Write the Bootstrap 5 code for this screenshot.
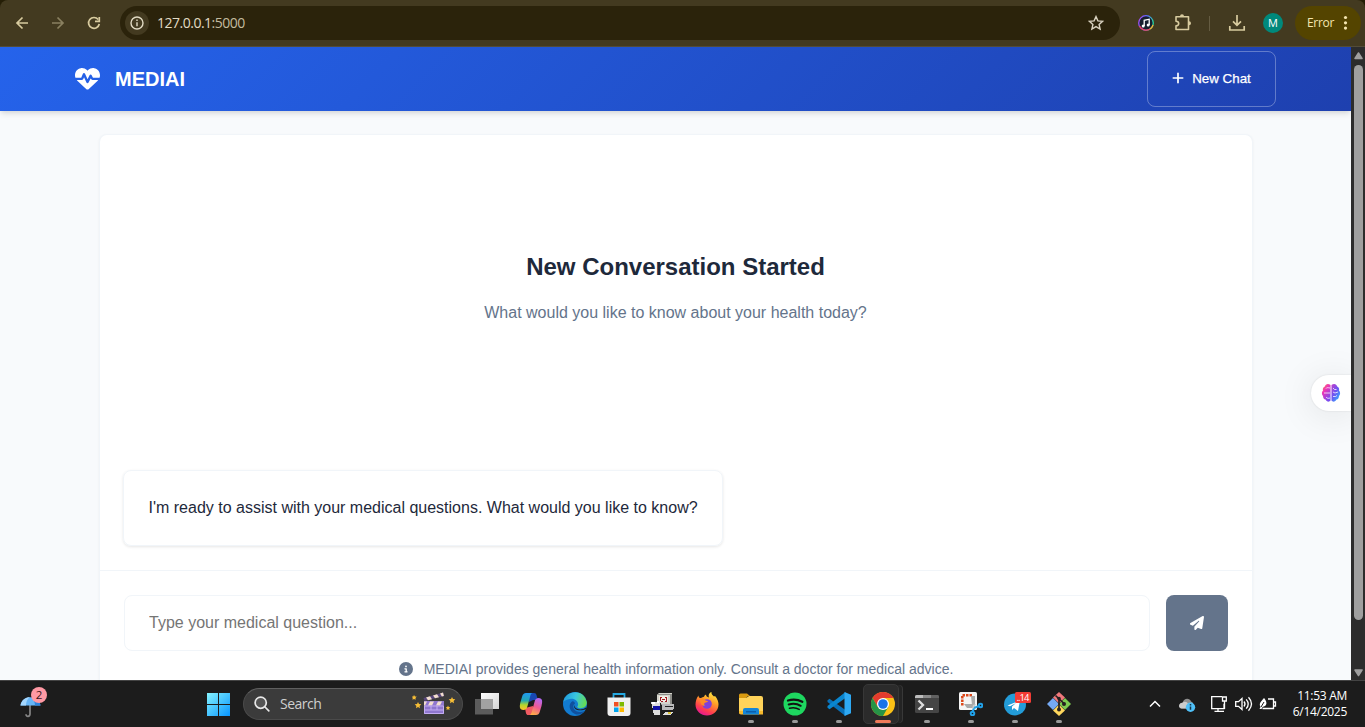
<!DOCTYPE html>
<html lang="en">
<head>
<meta charset="utf-8">
<meta name="viewport" content="width=device-width, initial-scale=1">
<title>MEDIAI</title>
<link rel="stylesheet" href="https://cdn.jsdelivr.net/npm/bootstrap@5.3.0/dist/css/bootstrap.min.css">
<style>
body{font-family:"Liberation Sans",Arial,sans-serif;color:#1e293b;background:#251e06}
svg{display:block;flex:none}
.ui-font{font-family:"Open Sans","Noto Sans",sans-serif}
.toolbar{height:47px;background:#433a20;border-bottom:1px solid #534c38;border-radius:8px 8px 0 0;color:#d8cb9f}
.omnibox{width:1000px;height:34px;margin-left:18px;background:#2b230b;padding:0 16px 0 5px}
.site-info{width:24px;height:24px;background:#433a20}
.address{font-size:14px;margin-left:8px;padding-bottom:2px;letter-spacing:-.5px;color:#e2dbc4}
.address .port{color:#c3bb9f}
.avatar{width:20px;height:20px;background:#00897b;color:#fff;font-size:11px;margin-left:17px}
.err{width:66px;height:34px;margin-left:12px;padding-left:12px;background:#544400;color:#f5e6b0;font-size:12px;letter-spacing:-.3px}
.divider{width:1px;height:15px;background:#655c42;margin:0 18px 0 17px}
.page-area{background:#f8fafc}
.app-nav{height:64px;background:linear-gradient(135deg,#2563eb,#1e40af);box-shadow:0 4px 6px -1px rgba(0,0,0,.1),0 2px 4px -1px rgba(0,0,0,.06);z-index:1}
.app-nav .inner{width:1201px}
.brand{font-size:20px;font-weight:700;gap:15px;color:#fff}
.brand svg{margin-bottom:1px}
.new-chat{width:129px;height:56px;border:1px solid rgba(255,255,255,.3);border-radius:8px;color:#fff;font-size:13.330px;gap:8px;font-weight:500;-webkit-text-stroke:.25px #fff}
.new-chat svg{margin-bottom:2px}
.chat-card{width:1154px;margin:23px 0 0 1px;background:#fff;border:1px solid #f1f5f9;border-bottom:0;border-radius:8px 8px 0 0;box-shadow:0 1px 3px rgba(0,0,0,.05)}
.messages{height:435px;padding:0 24px 24px 23px}
.welcome h2{font-size:24px;line-height:28px;font-weight:700;margin:118px 0 22px}
.welcome p{font-size:16px;line-height:20px;color:#64748b;margin:0}
.bot-message{width:600px;height:76px;border:1px solid #f1f5f9;border-radius:8px;padding:0 24px 1px 24.500px;box-shadow:0 1px 3px rgba(0,0,0,.1)}
.composer{border-top:1px solid #f1f5f9;padding:24px 24px 0}
.question{height:56px;border:1px solid #f1f5f9;border-radius:8px;padding:0 24px;color:#757575;font-size:16px}
.question::placeholder{color:#757575}
.question:focus{outline:0}
.send{width:62px;height:56px;background:#64748b;border-radius:8px;color:#fff}
.notice{font-size:14px;line-height:17px;color:#64748b;margin-top:10px;gap:11px}
.notice svg{margin-bottom:2px}
.scroll-track{width:14px;background:#2c2c2c;padding:5px 0 3px}
.scroll-thumb{width:9px;height:555px;background:#9f9f9f;border-radius:5px;margin-top:5px}
.brain-tab{right:0;top:328px;width:40px;height:36px;border-radius:18px 0 0 18px;background:#fff;padding-left:10px;box-shadow:0 4px 36px rgba(0,0,0,.1),0 0 2px rgba(0,0,0,.12)}
.taskbar{height:47px;background:#1c1c1c;border-top:1px solid #444;color:#fff}
.weather{width:196px;padding:0 0 2px 20px}
.task{width:44px;height:46px}
.task.running::after{content:"";position:absolute;bottom:4px;width:6px;height:3px;border-radius:2px;background:#999}
.task.current::before{content:"";position:absolute;inset:3px 6px 3px 2px;border:1px solid #373737;border-radius:5px;background:#2b2b2b;box-shadow:4px 0 0 -1px #242424,5px 0 0 -1px #383838}
.task.current::after{width:16px;background:#f07a5a}
.task svg{position:relative}
.search-pill{width:220px;height:32px;margin:0 2px 0 3px;background:#3b3b3b;border:1px solid #4a4a4a;border-top-color:#606060;color:#cfcfcf;font-size:14px;padding:0 6px 0 10px}
.search-pill .label{margin-left:10px;padding-bottom:2px;letter-spacing:-.5px}
.clock{font-size:12px;line-height:16px;letter-spacing:-.28px;width:60px}
</style>
<script src="https://cdn.jsdelivr.net/npm/bootstrap@5.3.0/dist/js/bootstrap.bundle.min.js"></script>
</head>
<body class="vh-100 overflow-hidden d-flex flex-column">

<!-- Browser toolbar -->
<div class="toolbar ui-font d-flex align-items-center flex-shrink-0">
  <svg width="102" height="20" viewBox="0 0 102 20" fill="none" stroke="#d8cb9f" stroke-width="1.700"><path d="M28 10H17m5.500-5.500L17 10l5.500 5.500"/><path stroke="#8a8060" d="M52 10h11m-5.500-5.500L63 10l-5.500 5.500"/><path d="M98.200 6.500A5.400 5.400 0 1 0 99.300 11"/><path d="M99.300 4v4.300H95"/></svg>
  <div class="omnibox rounded-pill d-flex align-items-center">
    <span class="site-info rounded-circle d-flex align-items-center justify-content-center"><svg width="14" height="14" viewBox="0 0 14 14"><circle cx="7" cy="7" r="6" fill="none" stroke="#e2dbc4" stroke-width="1.400"/><path d="M7 6.300v4M7 3.500v1.500" stroke="#e2dbc4" stroke-width="1.400"/></svg></span>
    <span class="address">127.0.0.1<span class="port">:5000</span></span>
    <svg class="ms-auto" width="16" height="16" viewBox="0 0 16 16" fill="none" stroke="#d9d2c0" stroke-width="1.400"><path d="m8 1.600 1.900 4.300 4.700.4-3.500 3.100 1 4.600L8 11.600 3.900 14l1-4.600-3.500-3.100 4.700-.4z"/></svg>
  </div>
  <svg width="16" height="16" viewBox="0 0 16 16" style="margin-left:18px"><defs><linearGradient id="ring" x1="0" y1="0" x2="1" y2=".4"><stop stop-color="#b545f0"/><stop offset=".5" stop-color="#5b6bff"/><stop offset="1" stop-color="#27d6a0"/></linearGradient></defs><circle cx="8" cy="8" r="7.300" fill="#171e2e" stroke="url(#ring)" stroke-width="1.300"/><path d="M1.500 11A7.300 7.300 0 0 0 12 14" fill="none" stroke="#f33b62" stroke-width="1.300"/><path d="M12 14a7.300 7.300 0 0 0 3-4" fill="none" stroke="#f2ae37" stroke-width="1.300"/><path d="M6.200 11V5.300l5-1.100V10" fill="none" stroke="#fff" stroke-width="1.300"/><circle cx="5.200" cy="11" r="1.500" fill="#fff"/><circle cx="10.200" cy="10" r="1.500" fill="#fff"/></svg>
  <svg width="18" height="18" viewBox="0 0 18 18" fill="none" stroke="#d8cb9f" stroke-width="1.600" style="margin-left:20px"><path d="M2 2.800h12.500v12.700H2v-3.600c3.600-.1 3.600-4.600 0-4.700z" stroke-linejoin="round"/><path d="M6 2.300a2 2 0 0 1 4 0zM15 7.200a2 2 0 0 1 0 4z" fill="#d8cb9f" stroke="none"/></svg>
  <span class="divider"></span>
  <svg width="18" height="18" viewBox="0 0 18 18" fill="none" stroke="#d8cb9f" stroke-width="1.700"><path d="M9 1v10M5 7.300l4 4 4-4M1.800 12v4h14.400v-4"/></svg>
  <span class="avatar rounded-circle d-flex align-items-center justify-content-center">M</span>
  <span class="err rounded-pill d-flex align-items-center"><span>Error</span><svg width="5" height="16" viewBox="0 0 5 16" fill="#f5e6b0" style="margin-left:9px"><circle cx="2.500" cy="2.500" r="1.600"/><circle cx="2.500" cy="7.800" r="1.600"/><circle cx="2.500" cy="13.100" r="1.600"/></svg></span>
</div>

<div class="page-area d-flex flex-grow-1 overflow-hidden">
  <div class="flex-grow-1 d-flex flex-column align-items-center position-relative overflow-hidden">
    <nav class="app-nav w-100 d-flex justify-content-center flex-shrink-0">
      <div class="inner d-flex align-items-center justify-content-between">
        <div class="brand d-flex align-items-center">
          <svg width="25" height="25" viewBox="0 0 512 512" fill="#fff"><path d="M228.300 469.100L47.600 300.400c-4.200-3.900-8.200-8.100-11.900-12.400h87c22.600 0 43-13.600 51.700-34.500l10.500-25.200 49.300 109.500c3.800 8.500 12.100 14 21.400 14.100s17.800-5 22-13.300L320 253.700l1.700 3.400c9.500 19 28.900 31 50.100 31H476.300c-3.700 4.300-7.700 8.500-11.900 12.400L283.700 469.100c-7.500 7-17.400 10.900-27.700 10.900s-20.200-3.900-27.700-10.900zM503.700 240h-132c-3 0-5.800-1.700-7.200-4.400l-23.200-46.300c-4.100-8.100-12.400-13.300-21.500-13.300s-17.400 5.100-21.500 13.300l-41.400 82.800L205.900 158.200c-3.900-8.700-12.700-14.300-22.200-14.100s-18.100 5.900-21.800 14.800l-31.800 76.300c-1.200 3-4.200 4.900-7.400 4.900H16c-2.600 0-5 .4-7.300 1.100C3 225.200 0 208.200 0 190.900v-5.800c0-69.900 50.500-129.500 119.400-141C165 36.500 211.400 51.400 244 84l12 12 12-12c32.600-32.600 79-47.500 124.600-39.900C461.500 55.600 512 115.200 512 185.100v5.800c0 16.900-2.800 33.500-8.300 49.100z"/></svg>
          <span>MEDIAI</span>
        </div>
        <div class="new-chat d-flex align-items-center justify-content-center" role="button">
          <svg width="12" height="14" viewBox="0 0 448 512" fill="#fff"><path d="M256 80c0-17.700-14.300-32-32-32s-32 14.300-32 32V224H48c-17.700 0-32 14.300-32 32s14.300 32 32 32H192V432c0 17.700 14.300 32 32 32s32-14.300 32-32V288H400c17.700 0 32-14.300 32-32s-14.300-32-32-32H256V80z"/></svg>
          <span>New Chat</span>
        </div>
      </div>
    </nav>

    <main class="chat-card flex-grow-1">
      <div class="messages d-flex flex-column justify-content-between">
        <div class="welcome text-center">
          <h2>New Conversation Started</h2>
          <p>What would you like to know about your health today?</p>
        </div>
        <div class="bot-message d-flex align-items-center">I'm ready to assist with your medical questions. What would you like to know?</div>
      </div>
      <div class="composer">
        <div class="d-flex gap-3">
          <input class="question flex-grow-1" type="text" placeholder="Type your medical question...">
          <button class="send btn p-0 border-0 d-flex align-items-center justify-content-center" aria-label="Send">
            <svg width="14" height="14" viewBox="0 0 512 512" fill="#fff"><path d="M498.100 5.600c10.100 7 15.400 19.100 13.500 31.200l-64 416c-1.500 9.700-7.400 18.200-16 23s-18.900 5.400-28 1.600L284 427.700l-68.500 74.100c-8.900 9.700-22.900 12.900-35.200 8.100S160 493.200 160 480V396.400c0-4 1.500-7.800 4.200-10.700L331.800 202.800c5.800-6.300 5.600-16-.4-22s-15.700-6.400-22-.7L106 360.800 17.700 316.600C7.100 311.300 .3 300.700 0 288.900s5.900-22.800 16.100-28.700l448-256c10.700-6.100 23.900-5.500 34 1.400z"/></svg>
          </button>
        </div>
        <div class="notice d-flex align-items-center justify-content-center">
          <svg width="14" height="14" viewBox="0 0 512 512" fill="#64748b"><path d="M256 512A256 256 0 1 0 256 0a256 256 0 1 0 0 512zM216 336h24V272H216c-13.300 0-24-10.700-24-24s10.700-24 24-24h48c13.300 0 24 10.700 24 24v88h8c13.300 0 24 10.700 24 24s-10.700 24-24 24H216c-13.300 0-24-10.700-24-24s10.700-24 24-24zm40-208a32 32 0 1 1 0 64 32 32 0 1 1 0-64z"/></svg>
          <span>MEDIAI provides general health information only. Consult a doctor for medical advice.</span>
        </div>
      </div>
    </main>

    <div class="brain-tab position-absolute d-flex align-items-center">
      <svg width="20" height="20" viewBox="0 0 20 20"><defs><linearGradient id="bl" x1="0" y1="0" x2=".6" y2="1"><stop stop-color="#ff9a3c"/><stop offset=".4" stop-color="#ef35b5"/><stop offset="1" stop-color="#7a4bf0"/></linearGradient><linearGradient id="br" x1="0" y1="0" x2=".8" y2="1"><stop stop-color="#c43cc8"/><stop offset=".5" stop-color="#6c55f2"/><stop offset="1" stop-color="#31b6ff"/></linearGradient></defs><path fill="url(#bl)" d="M9.500 2C7 0 4.500 1 3.800 3.500 2 4.200 1.500 6 2 7.500.5 9 .5 11.500 2 13c0 2 1 3.200 2.500 3.600C6 19.500 8.500 19 9.500 17.500z"/><path fill="url(#br)" d="M10.500 2C13 0 15.500 1 16.200 3.500 18 4.200 18.500 6 18 7.500c1.500 1.500 1.500 4 0 5.500 0 2-1 3.200-2.500 3.600-1.500 2.900-4 2.400-5 .9z"/><path fill="none" stroke="#fff" stroke-opacity=".75" d="M3 10h6M5 5.500C5.500 4.500 7 4.500 9 5M5 14c1 1.500 2.500 1.500 4 1M12 5l1.500 1.500h2M12 9l2 1 3-1M12 13.500h2.500l1.500-1"/></svg>
    </div>
  </div>

  <div class="scroll-track d-flex flex-column align-items-center">
    <svg width="9" height="8" viewBox="0 0 9 8"><path d="M4.500 1 8 6.500H1z" fill="#9f9f9f" stroke="#9f9f9f" stroke-linejoin="round" stroke-width="1.500"/></svg>
    <div class="scroll-thumb"></div>
    <svg class="mt-auto" width="9" height="8" viewBox="0 0 9 8"><path d="M4.500 6.500 8 1H1z" fill="#9f9f9f" stroke="#9f9f9f" stroke-linejoin="round" stroke-width="1.500"/></svg>
  </div>
</div>

<!-- Desktop taskbar -->
<div class="taskbar ui-font d-flex align-items-center flex-shrink-0">
  <div class="weather">
    <svg width="28" height="32" viewBox="0 0 28 32"><path d="M10 18v9c0 3-4 3-4 .3" fill="none" stroke="#858585" stroke-width="1.700"/><path fill="#66b5f7" d="M.5 18.500C2 7.500 18 7.500 20.500 18.500z"/><path fill="#a4d7ff" d="M.5 18.500C1.500 13 5 10.500 10 10c-3 2-4 5-4 8.500z"/><path fill="#2e83dc" d="M15 18.500c0-3.500-1.500-6.500-4-8.500 6 .5 9 4 9.500 8.500z"/><circle cx="19" cy="8" r="8" fill="#ff99a4"/><text x="19" y="12" text-anchor="middle" font-size="11.500" fill="#3b1519">2</text></svg>
  </div>
  <div class="task d-flex align-items-center justify-content-center"><svg width="24" height="24" viewBox="0 0 24 24"><defs><linearGradient id="win" x1="0" y1="0" x2="1" y2="1"><stop stop-color="#85f3ff"/><stop offset="1" stop-color="#0795ff"/></linearGradient></defs><path fill="url(#win)" d="M1 1h11v11H1zm12 0h11v11H13zM1 13h11v11H1zm12 0h11v11H13z"/></svg></div>
  <div class="search-pill rounded-pill d-flex align-items-center">
    <svg width="16" height="16" viewBox="0 0 16 16" fill="#555" stroke="#e8e8e8" stroke-width="1.700" stroke-linecap="round"><circle cx="6.700" cy="6.700" r="5.600"/><path d="m11 11 3.800 3.800"/></svg>
    <span class="label">Search</span>
    <svg class="ms-auto" width="44" height="24" viewBox="0 0 44 24"><path fill="#8f77cf" d="M12 9h20v13H12z"/><path fill="#58477b" d="m11.500 6 19.700-5.500 1 3.600-19.700 5z"/><path fill="#f3dfce" d="m14 5.400 4-1.100 2 2.900-4 1zM21 3.400l4-1.100 2 3-4 1zM28 1.500l3-.9.900 3.500-2 .5zM12 9.500h3l-2 4h-1zm6 0h4l-2 4h-4zm8 0h4l-2 4h-4z"/><path fill="none" stroke="#c3adf2" d="M12.500 14v7.500h19V14zM13 18h18m-12-4v4m6 0v-4"/><g fill="#f6bd36"><path d="m2 3 1 1.400 1.700.2-1.200 1.300.2 1.800L2 7 .5 7.700l.2-1.800L0 4.600l1.300-.2zM6 10l1 2 2.300.3-1.700 1.600.4 2.300-2-1.100-2 1.100.4-2.300-1.700-1.600 2.300-.3zM40 5l1 2 2.300.3-1.700 1.600.4 2.300-2-1.100-2 1.100.4-2.300L36.700 7.300 39 7zM36 13.500l.7 1.500 1.600.2-1.100 1.100.3 1.700-1.500-.8-1.500.8.300-1.700-1.100-1.100 1.600-.2z"/></g></svg>
  </div>
  <!-- Task view -->
  <div class="task d-flex align-items-center justify-content-center"><svg width="24" height="24" viewBox="0 0 24 24"><defs><linearGradient id="tv" x2="1" y2="1"><stop stop-color="#fff"/><stop offset="1" stop-color="#d5d5d5"/></linearGradient></defs><path fill="url(#tv)" d="M6 1h18v16H6z"/><path fill="#606060" fill-opacity=".95" d="M0 7h18v15.500H0z"/><path fill="#a2a2a2" d="M6 7h12v10H6z"/></svg></div>
  <!-- Copilot -->
  <div class="task d-flex align-items-center justify-content-center"><svg width="24" height="24" viewBox="0 0 24 24"><defs><linearGradient id="ca" x1=".3" y1="0" x2=".3" y2="1"><stop stop-color="#2098f2"/><stop offset=".45" stop-color="#24a8b0"/><stop offset=".7" stop-color="#b2d52d"/><stop offset="1" stop-color="#ffc028"/></linearGradient><linearGradient id="cb" x1=".7" y1="0" x2=".3" y2="1"><stop stop-color="#b569f6"/><stop offset=".5" stop-color="#ef5a91"/><stop offset="1" stop-color="#ffb044"/></linearGradient></defs><path fill="#1848b4" d="M10 1h5c2 0 2.500 1.500 3 4l1 3h-5l-4 2z"/><path fill="#f05b62" d="m6 16 8-2 1 8c-1 1-6 1-6 1-2 0-2-2-3-7z"/><path fill="url(#ca)" d="M7 1h7c-2 0-2.500 2-3 4L8.500 14c-.7 3-2 4-4 4C0 18 .5 14 1.500 10L3 5c.8-3 2-4 4-4z"/><path fill="url(#cb)" d="M17 23h-7c2 0 2.500-2 3-4l2.500-9c.7-3 2-4 4-4 4.500 0 4 4 3 8L21 19c-.8 3-2 4-4 4z"/></svg></div>
  <!-- Edge -->
  <div class="task d-flex align-items-center justify-content-center"><svg width="24" height="24" viewBox="0 0 24 24"><defs><linearGradient id="ea" x1="0" y1=".3" x2="1" y2=".5"><stop stop-color="#209bdc"/><stop offset=".5" stop-color="#39c6df"/><stop offset="1" stop-color="#66dd50"/></linearGradient></defs><circle cx="12" cy="12" r="12" fill="#127bd0"/><path fill="url(#ea)" d="M.3 10C2-2 21-4 23.700 10c.6 5-4 7-8 6-2-.5-1.500-1.500-.8-2.500C16 10 12 6 7 7 3.500 7.500 1 9 .3 10z"/><path fill="#10509d" d="M10 9c-5 2-4.500 10 2 13 4 1.500 8-.5 9.500-3-4 2-9 1-10.500-2-1.500-3 0-5 1-6z"/><path fill="#1c1c1c" d="M12.500 9.500c-2 2-2 5 1 7 3 1.800 7 .9 9.500-1 1 1 0 2.300-2 2.300-5 1.500-10 0-10-3.800 0-2 .5-3.500 1.500-4.500z"/></svg></div>
  <!-- Store -->
  <div class="task d-flex align-items-center justify-content-center"><svg width="24" height="24" viewBox="0 0 24 24"><path fill="none" stroke="#25a9e2" stroke-width="1.800" d="M6.500 6V2h11v4"/><path fill="#f0f0f0" d="M.5 5.500h23V21q0 3-3 3h-17q-3 0-3-3z"/><path fill="#f25022" d="M7 10h4.500v4.500H7z"/><path fill="#7fba00" d="M12.500 10H17v4.500h-4.500z"/><path fill="#00a4ef" d="M7 15.500h4.500V20H7z"/><path fill="#ffb900" d="M12.500 15.500H17V20h-4.500z"/></svg></div>
  <!-- Classic computer -->
  <div class="task d-flex align-items-center justify-content-center"><svg width="24" height="24" viewBox="0 0 24 24" shape-rendering="crispEdges"><path fill="#8d8d88" d="M7 1h14v12H6V4z"/><path fill="#d4d4cc" d="M8 1h13v1H8zM6 3h13v9H6z"/><path fill="#f4efe4" d="M8 4h9v6H8z"/><path fill="none" stroke="#a11a22" d="M9 5.500h2m3 0h2M9.500 5v4m6-4v4M11 7.500h3M10 9.500h2m2 0h2"/><path fill="#bbb" d="M11 12h12v4l-2 2H11z"/><path fill="#222" d="M14 14h8v1h-8zM9 11h1v11H9z"/><path fill="#ddd" d="M0 10h9v13H3L1 14z"/><path fill="#1313a8" d="M2 14h7v4H2z"/><path fill="#fff" d="M1 10h3v2H1zm5-1h2v2H6z"/><path fill="#ddd" d="m12 22 3-2h8l-4 3h-7z"/><path fill="#dcc436" d="M17 20h3v2h-3z"/></svg></div>
  <!-- Firefox -->
  <div class="task d-flex align-items-center justify-content-center"><svg width="24" height="24" viewBox="0 0 24 24"><defs><linearGradient id="ff" x1=".8" y1="0" x2=".3" y2="1"><stop stop-color="#fff044"/><stop offset=".4" stop-color="#ff9b27"/><stop offset=".75" stop-color="#ff3d4f"/><stop offset="1" stop-color="#e31598"/></linearGradient></defs><path fill="url(#ff)" d="M3.500 3.500c0 2 1 2.500 2.500 2.500 1-.7 2-1.200 3-1.300C9.500 3.500 10 3 11 2.500c0 1.500 1 2.500 3 3C13 3 14.500.5 16.500 0c-.5 2 1 3 2.500 4.500l1-.5c1 1 3.500 4.500 3.500 8.500C23.500 19 18 23.500 12 23.500S.5 19 .5 12.500c0-3 1-6.500 3-9z"/><circle cx="12" cy="12" r="4.800" fill="#8040d8"/><path fill="#ff8b24" d="M5 7c2-.8 4-.5 5 1 .7 1 2 .8 3.200 1-.5 1.500-2 1.200-3.200 1.700-1 .5-1.200 2 0 3-3 .5-5-2-5-6.700z"/></svg></div>
  <!-- File Explorer -->
  <div class="task running position-relative d-flex align-items-center justify-content-center"><svg width="24" height="24" viewBox="0 0 24 24"><path fill="#d99a10" d="M0 3q0-1.500 1.500-1.500H8L11 4H9L7 6H0z"/><path fill="#ffd35a" d="M0 6h7l3-2h12q2 0 2 2v16H2q-2 0-2-2z"/><path fill="#f6b82b" d="M0 19h24v3.500H2q-2 0-2-2z"/><path fill="#1485d7" d="M4 22.500V18q0-2 2-2h12q2 0 2 2v4.500z"/><path fill="#0b5da9" d="M7 19h10v1.500H7z"/></svg></div>
  <!-- Spotify -->
  <div class="task running position-relative d-flex align-items-center justify-content-center"><svg width="24" height="24" viewBox="0 0 24 24"><circle cx="12" cy="12" r="11.500" fill="#1ed760"/><path fill="none" stroke="#121212" stroke-linecap="round" stroke-width="2.300" d="M5 8.500c5-1.500 10-1 14.300 1.300"/><path fill="none" stroke="#121212" stroke-linecap="round" stroke-width="2" d="M5.700 12.500c4.500-1.300 8.500-.8 12 1.300"/><path fill="none" stroke="#121212" stroke-linecap="round" stroke-width="1.600" d="M6.500 16.200c3.500-.9 6.800-.6 9.700 1.200"/></svg></div>
  <!-- VS Code -->
  <div class="task running position-relative d-flex align-items-center justify-content-center"><svg width="24" height="24" viewBox="0 0 24 24"><path fill="#0870b8" d="M.5 8.200 2.500 6.700 18.500 18v6L.5 10z"/><path fill="#0a86cf" d="M.5 15.800 2.500 17.300 18.500 6V0L.5 14z"/><path fill="#2ea9f3" d="M17.500 0 24 2.800v18.400L17.500 24z"/></svg></div>
  <!-- Chrome -->
  <div class="task running current position-relative d-flex align-items-center justify-content-center"><svg width="24" height="24" viewBox="0 0 24 24"><circle cx="12" cy="12" r="12" fill="#fbc116"/><path fill="#e33b2e" d="M1.600 6A12 12 0 0 1 22.400 6H12l-5.200 9z"/><path fill="#269447" d="M1.600 6A12 12 0 0 0 12 24l5.200-9H6.800z"/><circle cx="12" cy="12" r="6" fill="#fff"/><circle cx="12" cy="12" r="4.800" fill="#1a73e8"/></svg></div>
  <!-- Terminal -->
  <div class="task running position-relative d-flex align-items-center justify-content-center"><svg width="24" height="24" viewBox="0 0 24 24"><rect y="3" width="24" height="18" rx="1.500" fill="#454545"/><path fill="#bdbdbd" d="M0 6V4.500Q0 3 1.500 3H8v3z"/><path fill="#8a8a8a" d="M8 3h8v3H8z"/><path fill="#626262" d="M16 3h6.500Q24 3 24 4.500V6h-8z"/><path fill="none" stroke="#ddd" stroke-width="2.300" d="m3.500 8.500 4.500 4.500-4.500 4.500"/><path fill="#fff" d="M11 16h7v2h-7z"/></svg></div>
  <!-- Snipping Tool -->
  <div class="task running position-relative d-flex align-items-center justify-content-center"><svg width="24" height="24" viewBox="0 0 24 24"><rect width="18" height="18" rx="1.500" fill="#f5f5f5"/><path fill="none" stroke="#dc4718" stroke-width="2.500" stroke-dasharray="2.500 1" d="M13 3.300H3.300V14"/><path fill="#aaa" d="M12 4h4v11l-3-2zM5 12h10v4H8z"/><path fill="#ccc" d="m14 13 3-1-2 4-2 1z"/><g fill="none" stroke="#21a1e8" stroke-width="2"><circle cx="21.500" cy="13.500" r="1.800"/><circle cx="13.500" cy="21.500" r="1.800"/><path d="m15 16 5-2m-6.500 5.500 1.500-3"/></g></svg></div>
  <!-- Telegram -->
  <div class="task running position-relative d-flex align-items-center justify-content-center"><svg width="28" height="24" viewBox="0 0 28 24" style="left:2px"><circle cx="12" cy="12.500" r="11" fill="#239cd8"/><path fill="#fff" d="m4.500 13.500 12.500-5-2 10.500-4-3-2 2v-3.500l4-3.500-6 3.300z"/><rect x="12" width="16" height="11" rx="1.500" fill="#f33c35"/><text x="20" y="9" font-size="9.500" fill="#fff" text-anchor="middle" textLength="13">..14</text></svg></div>
  <!-- Git -->
  <div class="task running position-relative d-flex align-items-center justify-content-center"><svg width="26" height="24" viewBox="0 0 26 24"><path fill="#f0787b" d="m13 0 6 5.500-6 6-6-6z"/><path fill="#75a9f3" d="m7 6 6 6-6 6-6-6z"/><path fill="#7ccc50" d="m19 6 6 6-6 6-6-6z"/><path fill="#ffd75d" d="m13 12.500 6 6L13 24l-6-5.500z"/><path fill="none" stroke="#252020" stroke-width="1.700" d="m9.500 3.500 8.500 8M13 7v11"/><g fill="#252020"><circle cx="13" cy="6.500" r="1.800"/><circle cx="18" cy="12" r="2"/><circle cx="13" cy="17.500" r="2"/></g></svg></div>

  <div class="ms-auto d-flex align-items-center" style="padding-right:18px">
    <svg width="128" height="24" viewBox="0 0 128 24" fill="none" stroke="#fff" stroke-width="1.300" style="margin-right:10px"><path stroke-width="1.500" d="m1 14.500 5-5 5 5"/><path fill="#909090" stroke="none" d="M32 16.500c-3-1-2-5.500 1.500-5.700C35 5.500 41 6 42 9.500c3 .5 3 7 0 7z"/><path fill="#ccc" stroke="none" d="M33 16.500c-4 0-4-5.500.500-5.700 2-2 5-.7 5.500 1l-1 4.700z"/><circle cx="41.500" cy="15.300" r="4.700" fill="#4fc0f8" stroke="none"/><path stroke="#143549" stroke-width="1.500" d="M41.500 14.500v3.300M41.500 12v1.400"/><path d="M73 4.700H62.700v12H75v-5M65.500 19.300H75M69 17v2m4.500-14h3.800v4h-3.800zm2 4v8"/><path d="M86.700 9.700h2.800L93 6.500v11l-3.500-3.200h-2.800zM95 9.500q2 2.500 0 5m2.200-7.200q4 4.700 0 9.400m2.300-11.400q6 6.700 0 13.400"/><path d="M119 7h5.500v9.500h-11M125 10h1.500v4H125"/><path fill="#fff" stroke="none" d="M111.500 15c-2-3.500.5-5.500 3.500-9 2.500 3 3.500 6 1 8l-2.500 1-1 2h-2z"/><path stroke="#1c1c1c" stroke-width="1" d="m112 15 3-5"/></svg>
    <div class="clock text-end"><div>11:53 AM</div><div>6/14/2025</div></div>
  </div>
</div>
</body>
</html>
